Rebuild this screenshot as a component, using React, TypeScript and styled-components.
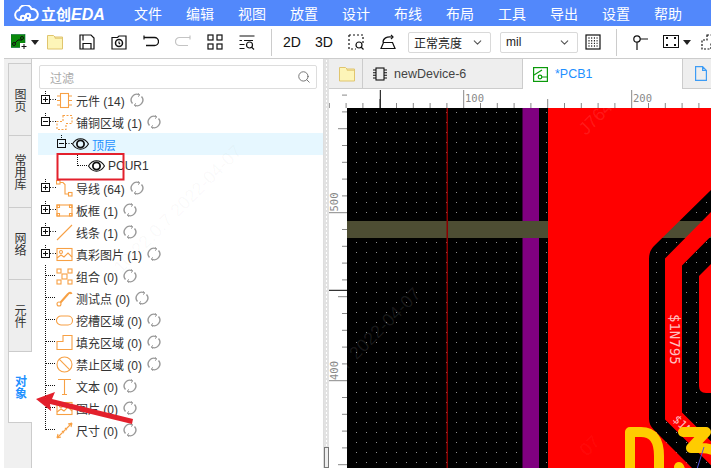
import React from "react";
import styled, { createGlobalStyle } from "styled-components";
import { ChevronDown, Search } from "lucide-react";

const GlobalStyle = createGlobalStyle`
  html, body {
    margin: 0;
    padding: 0;
    background: #fff;
    font-family: "Liberation Sans", "Noto Sans CJK SC", sans-serif;
  }
`;

const MENU = ["文件", "编辑", "视图", "放置", "设计", "布线", "布局", "工具", "导出", "设置", "帮助"];
const SIDE_TABS = ["图页", "常用库", "网络", "元件", "对象"];
const ORANGE = "#f7a044";

type NodeKind = "plus" | "minus" | "leaf" | "last";

type TreeItem = {
  label: string;
  icon?: React.ReactNode;
  kind: NodeKind;
  depth?: number;
  selected?: boolean;
  noSync?: boolean;
};

const Orange: React.FC<{ children: React.ReactNode }> = ({ children }) => (
  <svg width="17" height="17" viewBox="0 0 17 17" fill="none" stroke={ORANGE} strokeWidth="1.1">
    {children}
  </svg>
);

const ImageGlyph = () => (
  <Orange>
    <rect x="1" y="2.5" width="15" height="12" />
    <circle cx="5" cy="6" r="1.5" />
    <path d="M1 12l4-3 3 2 4-4 4 4" />
  </Orange>
);

const TREE: TreeItem[] = [
  {
    label: "元件 (14)",
    kind: "plus",
    icon: (
      <Orange>
        <rect x="4.5" y="1.5" width="8" height="14" />
        <path d="M1 4h3.500M1 8.500h3.500M1 13h3.500M12.500 4H16M12.500 8.500H16M12.500 13H16" />
      </Orange>
    ),
  },
  {
    label: "铺铜区域 (1)",
    kind: "minus",
    icon: (
      <Orange>
        <path d="M7 1.500h9v8h-6v6H1v-8h6z" strokeDasharray="2 1.500" />
      </Orange>
    ),
  },
  { label: "顶层", kind: "minus", depth: 1, selected: true, noSync: true },
  { label: "PCUR1", kind: "last", depth: 2, noSync: true },
  {
    label: "导线 (64)",
    kind: "plus",
    icon: (
      <Orange>
        <rect x="0.500" y="0.500" width="3.500" height="3.500" />
        <rect x="12.500" y="12.500" width="3.500" height="3.500" />
        <path d="M4 2.500h3l2 2v9.500h3.500" />
      </Orange>
    ),
  },
  {
    label: "板框 (1)",
    kind: "plus",
    icon: (
      <Orange>
        <rect x="1" y="3" width="15" height="11" />
        <path d="M1 3h2.500v2.500H1zM13.500 3H16v2.500h-2.500zM1 11.500h2.500V14H1zM13.500 11.500H16V14h-2.500z" />
      </Orange>
    ),
  },
  {
    label: "线条 (1)",
    kind: "plus",
    icon: (
      <Orange>
        <path d="M1 16L16 1" />
      </Orange>
    ),
  },
  { label: "真彩图片 (1)", kind: "plus", icon: <ImageGlyph /> },
  {
    label: "组合 (0)",
    kind: "leaf",
    icon: (
      <Orange>
        <rect x="1" y="1" width="4" height="4" />
        <rect x="12" y="1" width="4" height="4" />
        <rect x="1" y="12" width="4" height="4" />
        <rect x="12" y="12" width="4" height="4" />
        <rect x="6" y="6" width="5" height="5" />
      </Orange>
    ),
  },
  {
    label: "测试点 (0)",
    kind: "leaf",
    icon: (
      <Orange>
        <circle cx="3" cy="14" r="2" />
        <path d="M4.500 12.500L12 4c1.500-2 3-1.500 3.500 0" strokeWidth="2" />
      </Orange>
    ),
  },
  {
    label: "挖槽区域 (0)",
    kind: "leaf",
    icon: (
      <Orange>
        <rect x="0.500" y="4" width="16" height="9" rx="4.500" />
      </Orange>
    ),
  },
  {
    label: "填充区域 (0)",
    kind: "leaf",
    icon: (
      <Orange>
        <path d="M7 1.500h9v14H1v-8h6z" />
      </Orange>
    ),
  },
  {
    label: "禁止区域 (0)",
    kind: "leaf",
    icon: (
      <Orange>
        <circle cx="8.500" cy="8.500" r="7.500" />
        <path d="M3.200 3.200l10.600 10.600" />
      </Orange>
    ),
  },
  {
    label: "文本 (0)",
    kind: "leaf",
    icon: (
      <Orange>
        <path d="M2 1.500h13M8.500 1.500v15M6 16.500h5" />
      </Orange>
    ),
  },
  { label: "图片 (0)", kind: "leaf", icon: <ImageGlyph /> },
  {
    label: "尺寸 (0)",
    kind: "last",
    icon: (
      <Orange>
        <path d="M1 16L16 1M1 16l1-4M1 16l4-1M16 1l-4 1M16 1l-1 4M6 9l2 2M9 6l2 2" />
      </Orange>
    ),
  },
];

const Connector: React.FC<{ kind: NodeKind }> = ({ kind }) => (
  <svg width="15" height="22" viewBox="0 0 15 22" fill="none" stroke="#111" strokeWidth="1">
    {(kind === "plus" || kind === "minus") && (
      <>
        <rect x="0.500" y="6.500" width="8" height="8" />
        <path d="M2 10.500h5" />
        {kind === "plus" && <path d="M4.500 8v5" />}
        <path d="M4.500 2v4.500" strokeDasharray="1 1" />
        <path d="M9 10.500h6" strokeDasharray="1 1.500" />
      </>
    )}
    {(kind === "leaf" || kind === "last") && (
      <>
        <path d={kind === "leaf" ? "M4.500 0v22" : "M4.500 0v11"} strokeDasharray="1 1" />
        <path d="M5 10.500h10" strokeDasharray="1 1" />
      </>
    )}
  </svg>
);

const SyncIcon = () => (
  <svg width="14" height="14" viewBox="0 0 14 14" fill="none" stroke="#9a9a9a" strokeWidth="1.400">
    <path d="M9.500 2A5.600 5.600 0 0 0 2.500 10.500" />
    <path d="M4.500 12A5.600 5.600 0 0 0 11.500 3.500" />
    <path d="M8 0.300L9.800 2 8 3.700M6 10.300L4.200 12 6 13.700" strokeWidth="1" />
  </svg>
);

const EyeIcon = () => (
  <svg width="17" height="12" viewBox="0 0 17 12" fill="none" stroke="#111" strokeWidth="1.100">
    <path d="M0.500 6C3 2 5.500 0.800 8.500 0.800S14 2 16.500 6C14 10 11.500 11.200 8.500 11.200S3 10 0.500 6z" />
    <circle cx="8.500" cy="6" r="3.600" strokeWidth="1.800" />
  </svg>
);

const Line: React.FC<{ children: React.ReactNode; w?: number }> = ({ children, w = 16 }) => (
  <svg width={w} height="16" viewBox={`0 0 ${w} 16`} fill="none" stroke="#111" strokeWidth="1.200">
    {children}
  </svg>
);

const FolderIcon = () => (
  <svg width="16" height="16" viewBox="0 0 16 16" fill="#fdf5b8" stroke="#e0c56e" strokeWidth="1">
    <path d="M0.500 1.500h6l1.500 1.500h7.500v12H0.500z" />
    <path d="M8 3v1.200h7.500" fill="none" />
  </svg>
);

const Caret = () => (
  <svg width="8" height="5" viewBox="0 0 8 5">
    <path d="M0 0h8L4 5z" fill="#222" />
  </svg>
);

const App: React.FC = () => {
  return (
    <Page>
      <GlobalStyle />
      <MenuBar>
        <Logo>
          <svg width="25" height="17" viewBox="0 0 25 17" fill="none" stroke="#fff" strokeWidth="2">
            <path d="M8 15H6a5 5 0 0 1-.8-9.900A6.500 6.500 0 0 1 17.500 4 5.500 5.500 0 0 1 19 15h-5" />
            <circle cx="9" cy="13" r="2.200" />
            <circle cx="14" cy="11" r="2.200" />
          </svg>
          <LogoText>
            立创<em>EDA</em>
          </LogoText>
        </Logo>
        <MenuList>
          {MENU.map((m) => (
            <MenuItem key={m}>{m}</MenuItem>
          ))}
        </MenuList>
      </MenuBar>

      <Toolbar>
        <NewGroup>
          <svg width="18" height="16" viewBox="0 0 18 16">
            <rect x="0" y="0.500" width="14" height="13" fill="#0a8a0a" stroke="#063" strokeWidth="0.600" />
            <path d="M3 10L7 6h4M10 3" fill="none" stroke="#111" strokeWidth="1" />
            <circle cx="3" cy="10" r="1.500" fill="#0a8a0a" stroke="#111" />
            <circle cx="11" cy="4" r="1.500" fill="#0a8a0a" stroke="#111" />
            <rect x="9" y="9" width="8" height="7" fill="#fff" />
            <path d="M13 10v5M10.500 12.500h5" stroke="#111" strokeWidth="1" />
          </svg>
          <Caret />
        </NewGroup>
        <Tool>
          <FolderIcon />
        </Tool>
        <Tool>
          <Line>
            <path d="M1 1h11l3 3v11H1z" />
            <path d="M4 1v5.500h0M4 15V9.500h8V15" />
          </Line>
        </Tool>
        <Tool>
          <Line>
            <path d="M1 3.500h5.500L8 2h7v13H1z" />
            <circle cx="8" cy="9" r="3.500" strokeWidth="1.500" />
            <path d="M8 7.500V9l1 1" />
          </Line>
        </Tool>
        <Tool>
          <Line>
            <path d="M1 3.500h10.500a4 4 0 0 1 0 8H3" strokeWidth="1.300" />
            <path d="M1 1.500v4" />
          </Line>
        </Tool>
        <Tool>
          <svg width="16" height="16" viewBox="0 0 16 16" fill="none" stroke="#c4c4c4" strokeWidth="1.200">
            <path d="M15 3.500H4.500a4 4 0 0 0 0 8H13" />
            <path d="M15 1.500v4" />
          </svg>
        </Tool>
        <Tool>
          <Line>
            <rect x="1" y="1" width="5" height="5" />
            <rect x="10" y="1" width="5" height="5" />
            <rect x="1" y="10" width="5" height="5" />
            <rect x="10" y="10" width="5" height="5" />
          </Line>
        </Tool>
        <Tool>
          <Line>
            <path d="M0.500 2h15M5 6.500h9M0.500 6.500H3M0.500 10.500h5M0.500 14.500h5" />
            <circle cx="10.500" cy="11" r="3" />
            <path d="M12.800 13.300L15 15.500" />
          </Line>
        </Tool>
        <Divider $before={8} $after={4} />
        <TextTool>2D</TextTool>
        <TextTool>3D</TextTool>
        <Tool>
          <Line>
            <path d="M1 1h14v8M1 1v14h7" strokeDasharray="2 2" />
            <circle cx="11" cy="11" r="3" />
            <path d="M13 13l2.500 2.500" />
          </Line>
        </Tool>
        <Tool>
          <Line>
            <path d="M1 14.500h14l-2.500-6h-9zM1 14.500" />
            <path d="M3 8.500C3 4 7 2.500 11.500 3M11 1l2 2-2 2" />
          </Line>
        </Tool>
        <SelectBox $width={83} $gap={4}>
          正常亮度
          <ChevronDown size={13} color="#555" />
        </SelectBox>
        <SelectBox $width={78} $gap={9}>
          mil
          <ChevronDown size={13} color="#555" />
        </SelectBox>
        <GridTool>
          <Line>
            <rect x="1" y="1" width="14" height="14" />
            <path d="M3.500 4h9M3.500 6.700h9M3.500 9.400h9M3.500 12h9" strokeDasharray="1 1.700" strokeWidth="1.400" />
          </Line>
        </GridTool>
        <Divider $before={15} $after={15} />
        <PinTool>
          <Line>
            <circle cx="5" cy="5" r="3.200" />
            <path d="M8 5h8M5 8.200V16" />
          </Line>
        </PinTool>
        <FrameTool>
          <svg width="18" height="14" viewBox="0 0 18 14" fill="none" stroke="#111">
            <rect x="0.500" y="0.500" width="15" height="12" />
            <path d="M3 3h2M11 3h2M3 10h2M11 10h2" strokeWidth="2" />
          </svg>
          <Caret />
        </FrameTool>
        <PinTool>
          <Line>
            <path d="M6 1h10v9h-6v5H1V6h5z" strokeDasharray="2 1.500" />
          </Line>
        </PinTool>
      </Toolbar>

      <Body>
        <SideTabs>
          {SIDE_TABS.map((t) => (
            <SideTab key={t} $active={t === "对象"}>
              {t}
            </SideTab>
          ))}
        </SideTabs>

        <TreePanel>
          <FilterBox>
            <FilterText>过滤</FilterText>
            <Search size={14} color="#666" strokeWidth={1.500} />
          </FilterBox>
          <Tree>
            {TREE.map((item) => (
              <Row key={item.label} $depth={item.depth ?? 0} $selected={!!item.selected}>
                <Connector kind={item.kind} />
                {item.icon ?? <EyeIcon />}
                <RowLabel $selected={!!item.selected}>{item.label}</RowLabel>
                {!item.noSync && <SyncIcon />}
              </Row>
            ))}
          </Tree>
          <PanelMark>10.22.0.7 2022-04-07</PanelMark>
        </TreePanel>

        <Splitter>
          <SplitThumb />
        </Splitter>

        <Workspace>
          <TabBar>
            <FolderTab>
              <FolderIcon />
            </FolderTab>
            <DocTab>
              <svg width="14" height="14" viewBox="0 0 14 14" fill="none" stroke="#111" strokeWidth="1.100">
                <rect x="3" y="1" width="8" height="12" />
                <path d="M0 3h3M0 5.700h3M0 8.300h3M0 11h3M11 3h3M11 5.700h3M11 8.300h3M11 11h3" />
              </svg>
              newDevice-6
            </DocTab>
            <DocTab $active>
              <svg width="15" height="15" viewBox="0 0 15 15" fill="none" stroke="#0a9a0a" strokeWidth="1.200">
                <rect x="0.600" y="0.600" width="13.800" height="13.800" />
                <circle cx="7" cy="10" r="1.800" />
                <path d="M1 8l8-5M9 10h5" />
              </svg>
              *PCB1
            </DocTab>
            <PageTab>
              <svg width="12" height="15" viewBox="0 0 12 15" fill="none" stroke="#3d9cf5" strokeWidth="1.200">
                <path d="M0.600 0.600h7l3.800 3.800v10H0.600zM7.600 0.600v3.800h3.800" />
              </svg>
            </PageTab>
          </TabBar>
          <Board>
            <PcbDrawing />
          </Board>
        </Workspace>
      </Body>

      <Annotation viewBox="0 0 711 468" fill="none">
        <rect x="57.500" y="154" width="66" height="25.500" stroke="#e3202c" strokeWidth="2" />
        <path d="M36 399L55 392L52 399L133 419L132 424L50 404L51 411z" fill="#e3202c" />
      </Annotation>
    </Page>
  );
};

const PcbDrawing: React.FC = () => {
  const xTicks = Array.from({ length: 24 }, (_, i) => i - 8);
  const yTicks = Array.from({ length: 26 }, (_, i) => i - 7);
  return (
    <svg width="383" height="380" viewBox="328 88 383 380" style={{ display: "block" }}>
      <defs>
        <pattern id="dots" x="355" y="111" width="10" height="10" patternUnits="userSpaceOnUse">
          <rect width="1" height="1" fill="#8c8c8c" />
        </pattern>
      </defs>
      <rect x="328" y="88" width="383" height="380" fill="#fff" />
      {xTicks.map((k) => {
        const x = 462.7 + 16.8 * k;
        const top = k % 10 === 0 ? 89 : k % 5 === 0 ? 98 : 102;
        return <line key={k} x1={x} x2={x} y1={top} y2={107} stroke="#888" />;
      })}
      {yTicks.map((k) => {
        const y = 211.7 + 16.8 * k;
        const left = k % 10 === 0 ? 328 : k % 5 === 0 ? 337 : 341;
        return <line key={k} y1={y} y2={y} x1={left} x2={346} stroke="#888" />;
      })}
      <line x1="379.300" x2="379.300" y1="89" y2="107" stroke="#000" />
      <line x1="328" x2="346" y1="289.300" y2="289.300" stroke="#000" />
      <RulerText x="464" y="101">100</RulerText>
      <RulerText x="632" y="101">200</RulerText>
      <RulerText transform="translate(337,210.500) rotate(-90)">500</RulerText>
      <RulerText transform="translate(337,379) rotate(-90)">400</RulerText>

      <rect x="346" y="107" width="365" height="361" fill="#000" />
      <rect x="346" y="107" width="365" height="361" fill="url(#dots)" />
      <rect x="521.500" y="107" width="16.500" height="361" fill="#800080" />
      <rect x="346" y="220" width="365" height="17" fill="#4d4d33" />
      <rect x="445.500" y="107" width="1.500" height="361" fill="#8b0000" />

      <path
        d="M547 107H711V188L653 245Q648 250 648 258V418Q648 424 653 429L692 468H547Z"
        fill="#f00"
      />
      <path d="M711 262L698 275V385Q698 392 705 392H711Z" fill="#f00" />
      <path
        d="M725 208L672.500 261V415L730 472"
        fill="none"
        stroke="#f00"
        strokeWidth="17"
        strokeLinejoin="miter"
      />

      <SilkText transform="translate(669,313) rotate(90)" fontSize="14">$1N795</SilkText>
      <SilkText transform="translate(671,419) rotate(45)" fontSize="12">$1N</SilkText>

      <g fill="none" stroke="#fc0" strokeWidth="10" strokeLinecap="round" strokeLinejoin="round">
        <path d="M629 480V431H640Q658 431 658 455V480" />
        <path d="M682 431H705L690 447H700Q722 447 722 468" />
        <path d="M678 466Q684 482 700 482" />
      </g>
      <line x1="703" y1="446" x2="696" y2="468" stroke="#5050e0" strokeWidth="1" />

      <CanvasMark transform="translate(345,370) rotate(-45)">7 2022-04-07</CanvasMark>
      <CanvasMark transform="translate(585,135) rotate(-45)">J7641</CanvasMark>
      <RedMark transform="translate(586,456) rotate(-45)">07</RedMark>
    </svg>
  );
};

export default App;

const Page = styled.div`
  position: relative;
  width: 711px;
  height: 468px;
  overflow: hidden;
  box-sizing: border-box;
  padding-left: 4px;
  background: #fff;
  color: #333;
  font-size: 12px;
`;

const MenuBar = styled.div`
  height: 26px;
  display: flex;
  align-items: center;
  background: #5288fb;
  color: #fff;
`;

const Logo = styled.div`
  width: 130px;
  display: flex;
  align-items: center;
  gap: 2px;
  padding-left: 10px;
  box-sizing: border-box;
`;

const LogoText = styled.span`
  font-size: 15px;
  font-weight: 700;
  white-space: nowrap;

  em {
    font-style: italic;
    font-size: 16px;
  }
`;

const MenuList = styled.div`
  display: flex;
  gap: 24px;
`;

const MenuItem = styled.span`
  font-size: 14px;
  width: 28px;
  white-space: nowrap;
`;

const Toolbar = styled.div`
  height: 32px;
  display: flex;
  align-items: center;
  border-bottom: 1px solid #ccc;
  box-sizing: content-box;
`;

const NewGroup = styled.div`
  width: 37.5px;
  padding-left: 7px;
  box-sizing: border-box;
  display: flex;
  align-items: center;
  gap: 2px;
`;

const Tool = styled.div`
  width: 32px;
  flex: none;
  display: flex;
  align-items: center;
  justify-content: center;

  svg {
    display: block;
  }
`;

const Divider = styled.div<{ $before: number; $after: number }>`
  width: 1px;
  height: 27px;
  flex: none;
  background: #ccc;
  margin: 0 ${(p) => p.$after}px 0 ${(p) => p.$before}px;
`;

const TextTool = styled.div`
  width: 32px;
  flex: none;
  text-align: center;
  font-size: 14px;
  color: #111;
`;

const SelectBox = styled.div<{ $width: number; $gap: number }>`
  width: ${(p) => p.$width}px;
  height: 21px;
  flex: none;
  box-sizing: border-box;
  margin-left: ${(p) => p.$gap}px;
  padding: 0 6px 0 5px;
  display: flex;
  align-items: center;
  justify-content: space-between;
  border: 1px solid #d9d9d9;
  border-radius: 2px;
  font-size: 12px;
  color: #222;
`;

const GridTool = styled.div`
  flex: none;
  margin-left: 7px;
  display: flex;
`;

const PinTool = styled.div`
  flex: none;
  display: flex;
`;

const FrameTool = styled.div`
  flex: none;
  display: flex;
  align-items: center;
  gap: 2px;
  margin: 0 10px 0 15px;
`;

const Body = styled.div`
  height: 409px;
  display: flex;
`;

const SideTabs = styled.div`
  width: 28px;
  flex: none;
  box-sizing: border-box;
  padding: 4px 0 0 4px;
  background: #f0f0f0;
  border-right: 1px solid #ccc;
  display: flex;
  flex-direction: column;
`;

const SideTab = styled.div<{ $active: boolean }>`
  height: 72px;
  flex: none;
  box-sizing: border-box;
  margin-right: ${(p) => (p.$active ? "-1px" : "0")};
  padding-right: 2px;
  display: flex;
  align-items: center;
  justify-content: center;
  writing-mode: vertical-rl;
  text-orientation: upright;
  font-size: 12px;
  line-height: 1;
  font-weight: ${(p) => (p.$active ? 700 : 400)};
  color: ${(p) => (p.$active ? "#1e90ff" : "#333")};
  background: ${(p) => (p.$active ? "#fff" : "#eee")};
  border: 1px solid #ccc;
  border-width: 1px 0 ${(p) => (p.$active ? "1px" : "0")} 1px;
`;

const TreePanel = styled.div`
  position: relative;
  width: 291px;
  flex: none;
  border-right: 1px solid #ddd;
  overflow: hidden;
`;

const FilterBox = styled.div`
  height: 24px;
  margin: 6px 6px 0 7px;
  box-sizing: border-box;
  padding: 0 5px 0 10px;
  display: flex;
  align-items: center;
  justify-content: space-between;
  border: 1px solid #ddd;
  border-radius: 2px;
`;

const FilterText = styled.span`
  font-size: 12px;
  color: #aaa;
`;

const Tree = styled.div`
  margin: 0 0 0 6px;
`;

const Row = styled.div<{ $depth: number; $selected: boolean }>`
  height: 22px;
  display: flex;
  align-items: center;
  padding-left: ${(p) => 3 + p.$depth * 16}px;
  background: ${(p) => (p.$selected ? "#e6f7ff" : "transparent")};

  svg {
    flex: none;
  }
`;

const RowLabel = styled.span<{ $selected: boolean }>`
  margin: 0 5px 0 3px;
  font-size: 12px;
  color: ${(p) => (p.$selected ? "#1e90ff" : "#333")};
  white-space: nowrap;
`;

const PanelMark = styled.span`
  position: absolute;
  left: 60px;
  top: 140px;
  font-size: 18px;
  color: rgba(120, 120, 120, 0.04);
  transform: rotate(-45deg);
  white-space: nowrap;
  pointer-events: none;
`;

const Splitter = styled.div`
  width: 5px;
  flex: none;
  display: flex;
  flex-direction: column;
  justify-content: flex-end;
  background-color: #e2e2e2;
  background-image: radial-gradient(circle, #fff 0.8px, transparent 1px);
  background-size: 5px 4px;
`;

const SplitThumb = styled.div`
  height: 21px;
  box-sizing: border-box;
  border: 1px solid #777;
  background: #eee;
`;

const Workspace = styled.div`
  flex: 1;
  min-width: 0;
  display: flex;
  flex-direction: column;
`;

const TabBar = styled.div`
  height: 30px;
  flex: none;
  box-sizing: border-box;
  display: flex;
  background: #eee;
  border-bottom: 1px solid #ccc;
`;

const FolderTab = styled.div`
  width: 34px;
  flex: none;
  box-sizing: border-box;
  display: flex;
  align-items: center;
  padding-left: 10px;
  border-right: 1px solid #ccc;
`;

const DocTab = styled.div<{ $active?: boolean }>`
  width: 160px;
  flex: none;
  box-sizing: border-box;
  display: flex;
  align-items: center;
  gap: 7px;
  padding-left: 10px;
  font-size: 12.5px;
  border-right: 1px solid #ccc;
  color: ${(p) => (p.$active ? "#1e90ff" : "#444")};
  background: ${(p) => (p.$active ? "#fff" : "transparent")};
  height: ${(p) => (p.$active ? "30px" : "auto")};
`;

const PageTab = styled.div`
  flex: none;
  display: flex;
  align-items: center;
  padding-left: 12px;
`;

const Board = styled.div`
  flex: 1;
  min-height: 0;
  overflow: hidden;
`;

const RulerText = styled.text`
  font-family: "DejaVu Sans Mono", monospace;
  font-size: 10.5px;
  fill: #888;
`;

const SilkText = styled.text`
  font-family: "DejaVu Sans Mono", monospace;
  fill: #ffc0c0;
`;

const CanvasMark = styled.text`
  font-family: "Liberation Sans", sans-serif;
  font-size: 18px;
  fill: rgba(255, 255, 255, 0.1);
`;

const RedMark = styled(CanvasMark)`
  fill: rgba(255, 255, 255, 0.05);
`;

const Annotation = styled.svg`
  position: absolute;
  left: 0;
  top: 0;
  width: 711px;
  height: 468px;
  pointer-events: none;
`;
